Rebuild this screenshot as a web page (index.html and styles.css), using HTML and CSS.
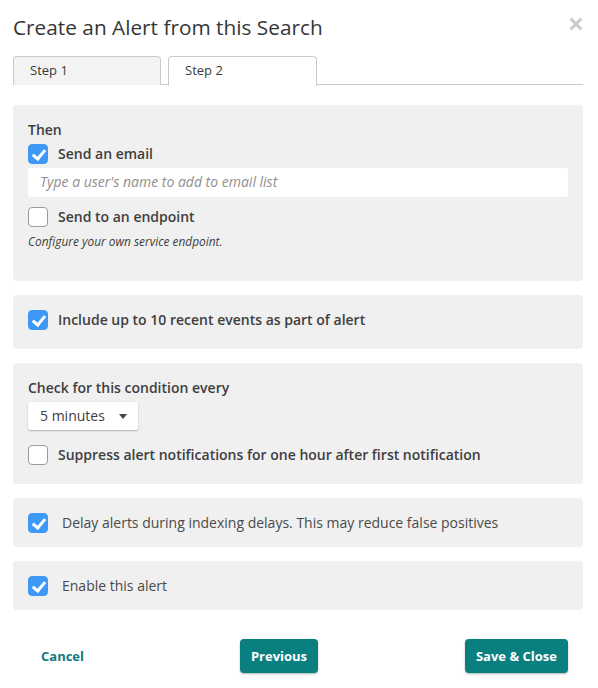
FILE: index.html
```html
<!DOCTYPE html>
<html>
<head>
<meta charset="utf-8">
<link rel="stylesheet" href="styles.css">
</head>
<body>
<div class="dialog">
  <div class="header">
    <h1 class="title">Create an Alert from this Search</h1>
    <svg class="close" width="12" height="12" viewBox="0 0 12 12"><path d="M1.5 1.5 L10.5 10.5 M10.5 1.5 L1.5 10.5" stroke="#c9c9c9" stroke-width="3" stroke-linecap="round"/></svg>
  </div>
  <div class="tabs">
    <div class="tab">Step 1</div>
    <div class="tab active">Step 2</div>
  </div>

  <div class="panel panel-then">
    <div class="heading">Then</div>
    <label class="row"><span class="cb checked"></span><span class="lbl">Send an email</span></label>
    <div class="input">Type a user's name to add to email list</div>
    <label class="row row-endpoint"><span class="cb"></span><span class="lbl">Send to an endpoint</span></label>
    <div class="hint">Configure your own service endpoint.</div>
  </div>

  <div class="panel panel-simple">
    <label class="row"><span class="cb checked"></span><span class="lbl">Include up to 10 recent events as part of alert</span></label>
  </div>

  <div class="panel panel-check">
    <div class="heading">Check for this condition every</div>
    <div class="select">5 minutes<span class="caret"></span></div>
    <label class="row row-suppress"><span class="cb"></span><span class="lbl">Suppress alert notifications for one hour after first notification</span></label>
  </div>

  <div class="panel panel-small">
    <label class="row"><span class="cb checked"></span><span class="lbl light">Delay alerts during indexing delays. This may reduce false positives</span></label>
  </div>

  <div class="panel panel-small">
    <label class="row"><span class="cb checked"></span><span class="lbl light">Enable this alert</span></label>
  </div>

  <div class="footer">
    <button class="btn link">Cancel</button>
    <button class="btn primary">Previous</button>
    <button class="btn primary">Save &amp; Close</button>
  </div>
</div>
</body>
</html>
```
FILE: styles.css
```css
* { box-sizing: border-box; }
html, body { margin: 0; padding: 0; background: #fff; }
body {
  font-family: "Open Sans", "Liberation Sans", sans-serif;
  color: #3e3e3e;
  width: 598px;
  height: 688px;
  overflow: hidden;
}
.dialog { padding: 0 15px 0 13px; }
.header {
  display: flex;
  justify-content: space-between;
  align-items: center;
  height: 56px;
  padding-bottom: 2px;
}
.title {
  margin: 0;
  font-size: 20.8px;
  font-weight: 400;
  color: #363636;
}
.close { margin-right: 1px; margin-top: -6px; }
.tabs {
  display: flex;
  gap: 7px;
  height: 29px;
  border-bottom: 1px solid #c9c9d1;
}
.tab {
  width: 148px;
  height: 29px;
  border: 1px solid #c9c9d1;
  border-bottom: none;
  border-radius: 4px 4px 0 0;
  background: #f3f3f3;
  font-size: 13px;
  padding: 4px 0 0 16px;
  color: #3a3a3a;
}
.tab.active {
  background: #fff;
  width: 149px;
  margin-bottom: -1px;
  height: 30px;
}
.panel {
  background: #f0f0f0;
  border-radius: 4px;
  padding: 15px 15px 0 15px;
  margin-top: 14px;
}
.panel-then { margin-top: 20px; height: 176px; }
.panel-simple { height: 54px; }
.panel-check { height: 121px; }
.panel-small { height: 49px; }
.heading {
  font-size: 14px;
  font-weight: 600;
  line-height: 20px;
  height: 20px;
}
.row {
  display: flex;
  align-items: center;
  gap: 10px;
  height: 20px;
}
.panel-then .row { margin-top: 4px; }
.panel-then .row-endpoint { margin-top: 10px; }
.cb {
  width: 20px;
  height: 20px;
  flex: none;
  border: 1px solid #979aa5;
  border-radius: 4px;
  background: #fff;
  position: relative;
}
.cb.checked {
  background: #3d98f6;
  border-color: #3d98f6;
}
.cb.checked::after {
  content: "";
  position: absolute;
  left: 6px;
  top: 2px;
  width: 5px;
  height: 10px;
  border: solid #fff;
  border-width: 0 3px 3px 0;
  transform: rotate(40deg);
}
.lbl {
  font-size: 14px;
  font-weight: 600;
  line-height: 20px;
  color: #3e3e3e;
}
.lbl.light { font-weight: 400; margin-left: 4px; color: #4a4a4a; }
.input {
  margin-top: 4px;
  height: 29px;
  background: #fff;
  border-radius: 3px;
  font-size: 14px;
  font-style: italic;
  color: #8f8f8f;
  padding: 3px 12px;
  line-height: 21px;
}
.hint {
  margin-top: 5px;
  font-size: 11.9px;
  font-style: italic;
  line-height: 18px;
  color: #3e3e3e;
}
.select {
  margin-top: 4px;
  width: 110px;
  height: 28px;
  background: #fff;
  border-radius: 2px;
  box-shadow: 0 1px 2px rgba(0,0,0,0.28);
  font-size: 14px;
  line-height: 28px;
  padding-left: 12px;
  color: #3e3e3e;
  display: flex;
  align-items: center;
}
.caret {
  margin-left: 14px;
  width: 0;
  height: 0;
  border-left: 4.5px solid transparent;
  border-right: 4.5px solid transparent;
  border-top: 5px solid #444;
}
.row-suppress { margin-top: 15px; }
.footer {
  display: flex;
  justify-content: space-between;
  align-items: center;
  padding: 0 15px 0 15px;
  margin-top: 29px;
}
.btn {
  font-family: "Open Sans", "Liberation Sans", sans-serif;
  font-size: 13px;
  font-weight: 700;
  height: 34px;
  border: none;
  border-radius: 4px;
  padding: 0 11px;
  cursor: pointer;
}
.btn.link { background: transparent; color: #107d7d; padding: 0 9px 0 13px; }
.btn.primary {
  background: #0a7f80;
  color: #fff;
  box-shadow: 0 1px 2px rgba(0,0,0,0.3);
}
```
